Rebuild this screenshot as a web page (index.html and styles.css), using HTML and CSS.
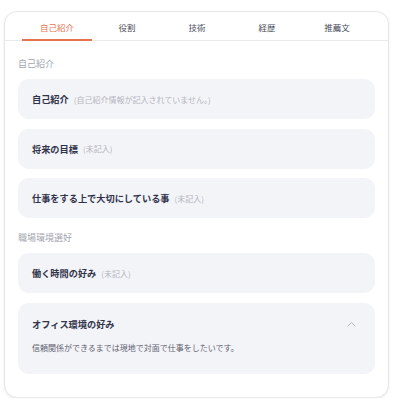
FILE: index.html
```html
<!DOCTYPE html>
<html lang="ja">
  <head>
    <meta charset="UTF-8" />
    <meta name="viewport" content="width=device-width, initial-scale=1.0" />
    <title>プロフィール</title>
    <link rel="stylesheet" href="styles.css">
  </head>
  <body>
    <div class="card">
      <div class="tabs">
        <div class="tab active">自己紹介</div>
        <div class="tab">役割</div>
        <div class="tab">技術</div>
        <div class="tab">経歴</div>
        <div class="tab">推薦文</div>
      </div>

      <div class="content">
        <section class="section">
          <h2 class="section-title">自己紹介</h2>
          <div class="list">
            <div class="item">
              <span class="item-title">自己紹介</span>
              <span class="item-note">(自己紹介情報が記入されていません。)</span>
            </div>
            <div class="item">
              <span class="item-title">将来の目標</span>
              <span class="item-note">(未記入)</span>
            </div>
            <div class="item">
              <span class="item-title">仕事をする上で大切にしている事</span>
              <span class="item-note">(未記入)</span>
            </div>
          </div>
        </section>

        <section class="section">
          <h2 class="section-title">職場環境選好</h2>
          <div class="list">
            <div class="item">
              <span class="item-title">働く時間の好み</span>
              <span class="item-note">(未記入)</span>
            </div>
            <div class="item open">
              <div class="item-head">
                <span class="item-title">オフィス環境の好み</span>
                <svg class="chevron" width="9" height="6" viewBox="0 0 9 6">
                  <path d="M1 5 L4.5 1.5 L8 5" fill="none" stroke="#b5b8c2" stroke-width="1" stroke-linecap="round" stroke-linejoin="round" />
                </svg>
              </div>
              <p class="item-body">信頼関係ができるまでは現地で対面で仕事をしたいです。</p>
            </div>
          </div>
        </section>
      </div>
    </div>
  </body>
</html>
```

FILE: styles.css
```css
body {
  margin: 0;
  background: #ffffff;
  font-family: "Noto Sans CJK JP", "Noto Sans", sans-serif;
}

.card {
  margin: 11px 0 0 4px;
  width: 383px;
  height: 385px;
  border: 1px solid #e6e7eb;
  border-radius: 13px;
  box-shadow: 0 1px 3px rgba(0, 0, 0, 0.08);
  background: #ffffff;
}

.tabs {
  display: flex;
  padding: 0 16px 0 17px;
  height: 28px;
  border-bottom: 1px solid #e8e9ed;
}

.tab {
  width: 70px;
  display: flex;
  align-items: center;
  justify-content: center;
  font-size: 8.5px;
  color: #4a4c59;
  border-bottom: 2px solid transparent;
  margin-bottom: -1px;
  padding-top: 2px;
}

.tab.active {
  color: #e8734f;
  border-bottom-color: #e8734f;
}

.content {
  padding: 17px 13px 0 13px;
}

.section + .section {
  margin-top: 14px;
}

.section-title {
  margin: 0 0 9px;
  font-size: 9px;
  line-height: 12px;
  font-weight: 400;
  color: #a3a6b0;
}

.list {
  display: flex;
  flex-direction: column;
  gap: 9.7px;
}

.item {
  height: 40px;
  padding: 0 14px;
  display: flex;
  align-items: center;
  gap: 5px;
  background: #f3f4f8;
  border-radius: 11px;
}

.item-title {
  font-size: 9.2px;
  font-weight: 700;
  color: #30334a;
}

.item-note {
  font-size: 8px;
  color: #b3b5bf;
}

.item.open {
  height: auto;
  display: block;
  padding: 14px 19px 20px 14px;
}

.item-head {
  display: flex;
  align-items: center;
  justify-content: space-between;
  height: 14px;
}

.item-body {
  margin: 11px 0 0;
  font-size: 8px;
  line-height: 12px;
  color: #5f6270;
}
```
